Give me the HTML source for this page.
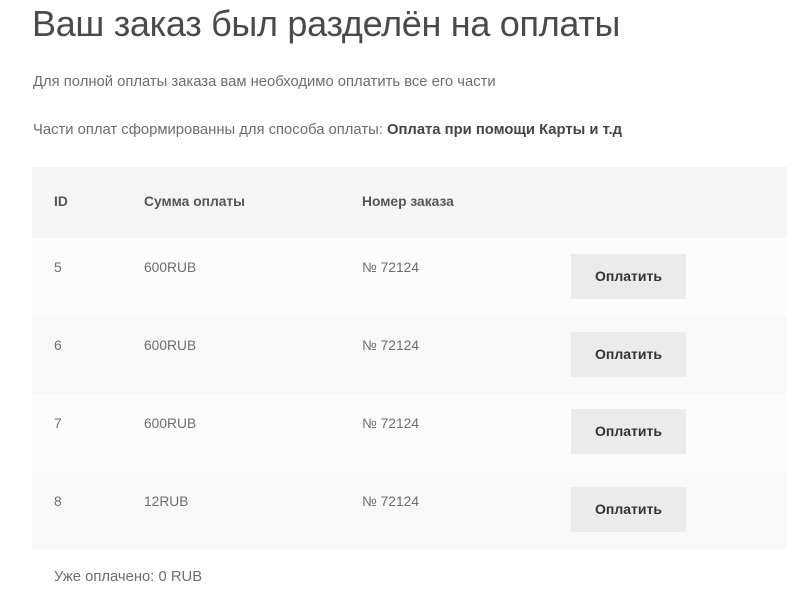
<!DOCTYPE html>
<html><head><meta charset="utf-8"><style>
body{margin:0;background:#fff;font-family:"Liberation Sans","DejaVu Sans",sans-serif;color:#6d6d6d;width:799px;height:593px;overflow:hidden;position:relative}
.a{position:absolute;white-space:nowrap}
h1{position:absolute;left:32px;top:3px;margin:0;font-weight:normal;font-size:36px;color:#4a4a4a;letter-spacing:-0.3px}
.p{font-size:14.8px;color:#6d6d6d}
.hdr{position:absolute;left:32px;top:167px;width:755px;height:71px;background:#f5f5f5}
.row{position:absolute;left:32px;width:755px;height:78px}
.btn{position:absolute;left:539px;width:115px;height:45px;background:#ebebeb;color:#333;font-weight:bold;font-size:14px;text-align:center;line-height:45px}
.c{position:absolute;font-size:13.8px}
</style></head><body>
<h1>Ваш заказ был разделён на оплаты</h1>
<div class="a p" style="left:33px;top:74px">Для полной оплаты заказа вам необходимо оплатить все его части</div>
<div class="a p" style="left:33px;top:122px">Части оплат сформированны для способа оплаты: <b style="color:#43454b">Оплата при помощи Карты и т.д</b></div>
<div class="hdr">
<div class="c" style="left:22px;top:27px;font-weight:bold;color:#555">ID</div>
<div class="c" style="left:112px;top:27px;font-weight:bold;color:#555">Сумма оплаты</div>
<div class="c" style="left:330px;top:27px;font-weight:bold;color:#555">Номер заказа</div>
</div>
<div class="row" style="top:238px;background:#fcfcfc"><div class="c" style="left:22px;top:22px">5</div><div class="c" style="left:112px;top:22px">600RUB</div><div class="c" style="left:330px;top:22px">№ 72124</div><div class="btn" style="top:16px">Оплатить</div></div>
<div class="row" style="top:316px;background:#f8f8f8"><div class="c" style="left:22px;top:22px">6</div><div class="c" style="left:112px;top:22px">600RUB</div><div class="c" style="left:330px;top:22px">№ 72124</div><div class="btn" style="top:16px">Оплатить</div></div>
<div class="row" style="top:394px;background:#fcfcfc"><div class="c" style="left:22px;top:22px">7</div><div class="c" style="left:112px;top:22px">600RUB</div><div class="c" style="left:330px;top:22px">№ 72124</div><div class="btn" style="top:15px">Оплатить</div></div>
<div class="row" style="top:472px;height:77px;background:#f8f8f8"><div class="c" style="left:22px;top:22px">8</div><div class="c" style="left:112px;top:22px">12RUB</div><div class="c" style="left:330px;top:22px">№ 72124</div><div class="btn" style="top:15px">Оплатить</div></div>
<div class="a p" style="left:54px;top:569px">Уже оплачено: 0 RUB</div>
</body></html>
